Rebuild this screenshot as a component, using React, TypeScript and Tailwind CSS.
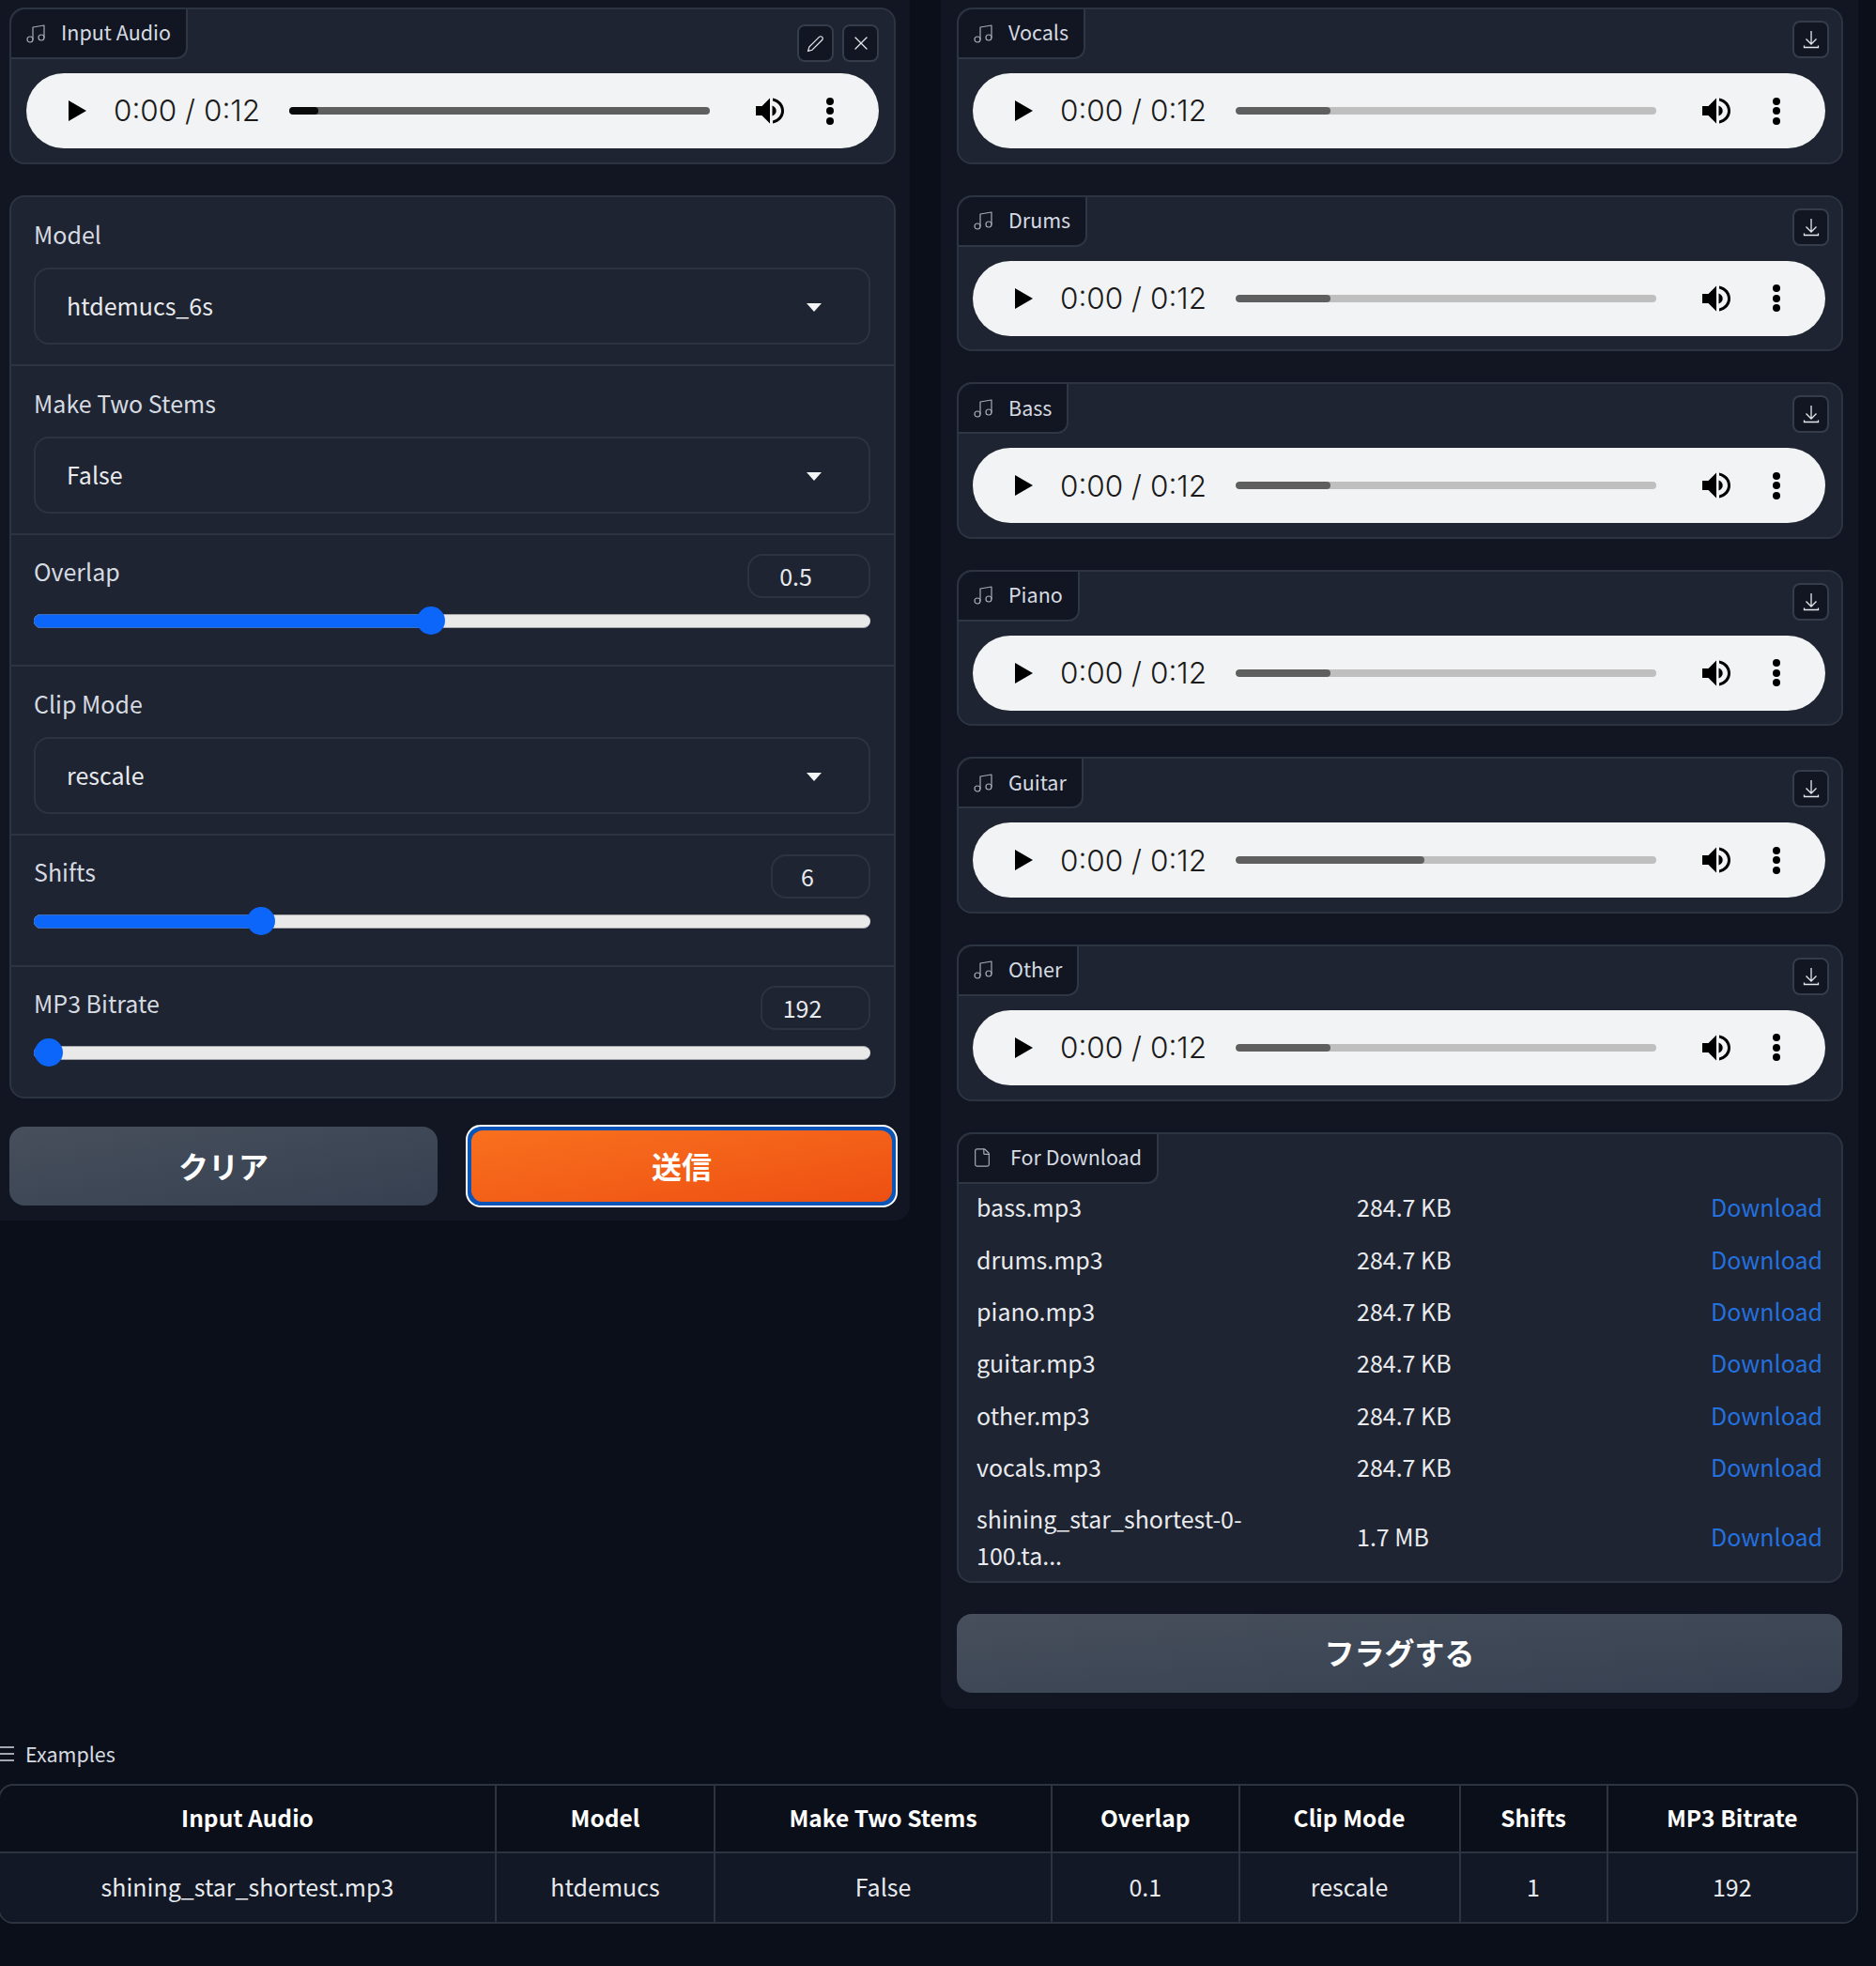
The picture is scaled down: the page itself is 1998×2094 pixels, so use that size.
import { Music, X, File } from "lucide-react";

const stems = [
  { name: "Vocals", fill: 101 },
  { name: "Drums", fill: 101 },
  { name: "Bass", fill: 101 },
  { name: "Piano", fill: 101 },
  { name: "Guitar", fill: 201 },
  { name: "Other", fill: 101 },
];

const files = [
  ["bass.mp3", "284.7 KB"],
  ["drums.mp3", "284.7 KB"],
  ["piano.mp3", "284.7 KB"],
  ["guitar.mp3", "284.7 KB"],
  ["other.mp3", "284.7 KB"],
  ["vocals.mp3", "284.7 KB"],
];

const columns = [
  ["Input Audio", "shining_star_shortest.mp3"],
  ["Model", "htdemucs"],
  ["Make Two Stems", "False"],
  ["Overlap", "0.1"],
  ["Clip Mode", "rescale"],
  ["Shifts", "1"],
  ["MP3 Bitrate", "192"],
];

function VolumeIcon() {
  return (
    <svg viewBox="0 0 30 30" className="w-[30px] h-[30px] shrink-0" fill="#000">
      <path d="M0 10h6.500L15 1.500v27L6.500 20H0z" />
      <path d="M17.500 9.500c2.800 1 4.200 3 4.200 5.500s-1.400 4.500-4.200 5.500z" />
      <path d="M18 1.500c7.500 1.500 12 6.800 12 13.500s-4.500 12-12 13.500v-3c5.500-1.500 9-5.500 9-10.500s-3.500-9-9-10.500z" />
    </svg>
  );
}

function Player({ fill, base, rest }: { fill: number; base: string; rest: string }) {
  return (
    <div className="h-20 rounded-full bg-[#f1f3f4] flex items-center pl-[45px]">
      <svg viewBox="0 0 19 22" className="w-[19px] h-[22px] shrink-0" fill="#000">
        <path d="M0 0l19 11L0 22z" />
      </svg>
      <span className="ml-[29px] w-[157px] shrink-0 whitespace-nowrap font-['Inter',sans-serif] font-light text-[31.500px] text-[#1a1a1a]">
        0:00 / 0:12
      </span>
      <div className={`ml-[30px] w-[448px] h-2 rounded shrink-0 overflow-hidden ${rest}`}>
        <div className={`h-full rounded ${base}`} style={{ width: fill }} />
      </div>
      <div className="ml-[49px]">
        <VolumeIcon />
      </div>
      <div className="ml-[45px] flex flex-col gap-[2.500px]">
        <span className="w-2 h-2 rounded-full bg-black" />
        <span className="w-2 h-2 rounded-full bg-black" />
        <span className="w-2 h-2 rounded-full bg-black" />
      </div>
    </div>
  );
}

function Tab({ children, label, wide }: { children: React.ReactNode; label: string; wide?: boolean }) {
  return (
    <div className={`h-[53px] flex items-center pl-[14px] pr-4 bg-[#111622] border-r-2 border-b-2 border-[#2f3644] rounded-br-xl rounded-tl-2xl text-[21.500px] text-[#d6dae1] ${wide ? "gap-[19px]" : "gap-[15px]"}`}>
      <span className="text-[#a5abb6]">{children}</span>
      <span className="pb-[2px]">{label}</span>
    </div>
  );
}

function IconButton({ children }: { children: React.ReactNode }) {
  return (
    <div className="w-[39px] h-10 rounded-lg border-2 border-[#353c4a] bg-[#111622] flex items-center justify-center text-[#e5e7eb]">
      {children}
    </div>
  );
}

function AudioBlock({ name, fill }: { name: string; fill: number }) {
  return (
    <div className="h-[166.6px] rounded-2xl border-2 border-[#2d3441] bg-[#1e2431] flex flex-col">
      <div className="h-[51px] flex items-start justify-between pr-[13px]">
        <Tab label={name}>
          <Music size={24} strokeWidth={1.200} />
        </Tab>
        <div className="mt-3">
          <IconButton>
            <svg viewBox="0 0 20 24" className="w-5 h-6" fill="none" stroke="currentColor" strokeWidth="1.300">
              <path d="M10 3v14M4.500 11.500L10 17l5.500-5.500" />
              <path d="M2.500 18.500v2h15v-2" />
            </svg>
          </IconButton>
        </div>
      </div>
      <div className="mt-[17px] ml-[15px] mr-[17px]">
        <Player fill={fill} base="bg-[#5f5f5f]" rest="bg-[#bfbfbf]" />
      </div>
    </div>
  );
}

function Select({ label, value }: { label: string; value: string }) {
  return (
    <div className="pt-5 pb-[21px] pl-6 pr-[25px]">
      <div className="h-[38px] leading-[38px] text-[25px] text-[#d6dae1]">{label}</div>
      <div className="mt-[17px] h-[82px] rounded-2xl border-2 border-[#2d3441] flex items-center justify-between pl-[33px] pr-[50px] text-[25px] text-[#e8eaee]">
        <span>{value}</span>
        <svg viewBox="0 0 16 9" className="w-4 h-[9px] mt-[2px]" fill="#f3f4f6">
          <path d="M0 0h16L8 9z" />
        </svg>
      </div>
    </div>
  );
}

function Slider({
  label,
  value,
  boxWidth,
  thumb,
}: {
  label: string;
  value: string;
  boxWidth: string;
  thumb: number;
}) {
  return (
    <div className="pt-5 pb-[39px] pl-6 pr-[25px]">
      <div className="flex justify-between items-start">
        <div className="-mt-px h-[38px] leading-[38px] text-[25px] text-[#d6dae1]">{label}</div>
        <div className={`h-[47px] rounded-2xl border-2 border-[#2d3441] flex items-center justify-center pr-[28px] text-[25px] text-[#e8eaee] ${boxWidth}`}>
          {value}
        </div>
      </div>
      <div className="relative mt-[17px] h-[15px] rounded-full bg-[#e9e9e9] border-y border-[#a3a5a8]">
        <div className="absolute -top-px left-0 h-[15px] rounded-full bg-[#0b66f9] border-y border-[#3a6fc4]" style={{ width: thumb + 1 }} />
        <div className="absolute -top-[9px] w-[30px] h-[30px] -ml-[14px] rounded-full bg-[#0b66f9]" style={{ left: thumb }} />
      </div>
    </div>
  );
}

export default function App() {
  return (
    <div className="min-h-screen bg-[#0b0f19] font-['Noto_Sans_CJK_JP',sans-serif] overflow-hidden">
      <div className="flex items-start">
        {/* left column */}
        <div className="w-[969px] h-[1300px] shrink-0 bg-[#111622] rounded-br-2xl pl-[10px] pr-[15px] pt-2">
          <div className="relative h-[167px] rounded-2xl border-2 border-[#2d3441] bg-[#1e2431] flex flex-col">
            <div className="h-[51px] flex items-start justify-between pr-[16px]">
              <Tab label="Input Audio">
                <Music size={24} strokeWidth={1.200} />
              </Tab>
              <div className="mt-4 flex gap-[9px]">
                <IconButton>
                  <svg viewBox="0 0 24 24" className="w-[19px] h-[19px]" fill="none" stroke="currentColor" strokeWidth="1.500">
                    <path d="M17 3a2.828 2.828 0 1 1 4 4L7.500 20.500 2 22l1.500-5.500L17 3z" />
                  </svg>
                </IconButton>
                <IconButton>
                  <X size={24} strokeWidth={1.300} />
                </IconButton>
              </div>
            </div>
            <div className="mt-[17px] ml-4 mr-4">
              <Player fill={31} base="bg-[#0a0a0a]" rest="bg-[#5f5f5f]" />
            </div>
          </div>

          <div className="mt-[33px] rounded-2xl border-2 border-[#2d3441] bg-[#1e2431] divide-y-2 divide-[#2d3441]">
            <Select label="Model" value="htdemucs_6s" />
            <Select label="Make Two Stems" value="False" />
            <Slider label="Overlap" value="0.5" boxWidth="w-[131px]" thumb={422} />
            <Select label="Clip Mode" value="rescale" />
            <Slider label="Shifts" value="6" boxWidth="w-[106px]" thumb={241} />
            <Slider label="MP3 Bitrate" value="192" boxWidth="w-[117px]" thumb={15} />
          </div>

          <div className="mt-[28px] flex gap-[30px] items-center">
            <button className="w-[456px] h-[84px] shrink-0 rounded-2xl bg-gradient-to-br from-[#474f5c] to-[#364050] text-[32px] font-bold text-white pb-[3px]">
              クリア
            </button>
            <button className="w-[460px] h-[88px] shrink-0 rounded-2xl border-2 border-white p-[4px] bg-[#0b55b8] text-[32px] font-bold text-white">
              <span className="h-full rounded-xl bg-gradient-to-br from-[#f8701e] to-[#ee4f12] flex items-center justify-center pb-[3px]">
                送信
              </span>
            </button>
          </div>
        </div>

        {/* right column */}
        <div className="ml-[33px] w-[977px] h-[1820px] shrink-0 bg-[#111622] rounded-b-2xl pl-[17px] pr-4 pt-2">
          <div className="flex flex-col gap-[33px]">
            {stems.map((s) => (
              <AudioBlock key={s.name} name={s.name} fill={s.fill} />
            ))}
          </div>

          <div className="mt-[33px] h-[480px] rounded-2xl border-2 border-[#2d3441] bg-[#1e2431]">
            <div className="flex">
              <Tab label="For Download" wide>
                <File size={22} strokeWidth={1.300} />
              </Tab>
            </div>
            <div className="-mt-[2px] pl-[19px] pr-[20px] text-[25px] text-[#e8eaee]">
              {files.map(([name, size]) => (
                <div key={name} className="h-[55.3px] flex items-center">
                  <span className="w-[405px]">{name}</span>
                  <span>{size}</span>
                  <a className="ml-auto text-[#2470de]">Download</a>
                </div>
              ))}
              <div className="h-[93px] flex items-center">
                <span className="w-[405px] leading-[39px]">
                  shining_star_shortest-0-
                  <br />
                  100.ta...
                </span>
                <span>1.7 MB</span>
                <a className="ml-auto text-[#2470de]">Download</a>
              </div>
            </div>
          </div>

          <button className="mt-[33px] w-[943px] h-[84px] rounded-2xl bg-gradient-to-br from-[#474f5c] to-[#364050] text-[32px] font-bold text-white pb-[3px]">
            フラグする
          </button>
        </div>
      </div>

      {/* examples */}
      <div className="pt-[32px] flex items-center gap-3 h-[64px] text-[21.500px] text-[#d6dae1]">
        <svg viewBox="0 0 15 16" className="w-[15px] h-4" stroke="#d6dae1" strokeWidth="1.500">
          <path d="M0 1h15M0 8h15M0 15h15" />
        </svg>
        <span>Examples</span>
      </div>
      <div className="mt-4 -ml-[2px] w-[1981px] rounded-2xl border-2 border-[#2d3441] overflow-hidden text-[25px] text-[#e8eaee]">
        <div className="grid grid-cols-[529px_233px_359px_199.500px_235px_157px_1fr] h-[72px] border-b-2 border-[#2d3441]">
          {columns.map(([head]) => (
            <div key={head} className="flex items-center justify-center pb-px text-[24.500px] font-semibold text-white border-r-2 border-[#2d3441] last:border-r-0">
              {head}
            </div>
          ))}
        </div>
        <div className="grid grid-cols-[529px_233px_359px_199.500px_235px_157px_1fr] h-[73px] bg-[#121825]">
          {columns.map(([head, cell]) => (
            <div key={head} className="flex items-center justify-center pb-[2px] border-r-2 border-[#2d3441] last:border-r-0">
              {cell}
            </div>
          ))}
        </div>
      </div>
    </div>
  );
}
